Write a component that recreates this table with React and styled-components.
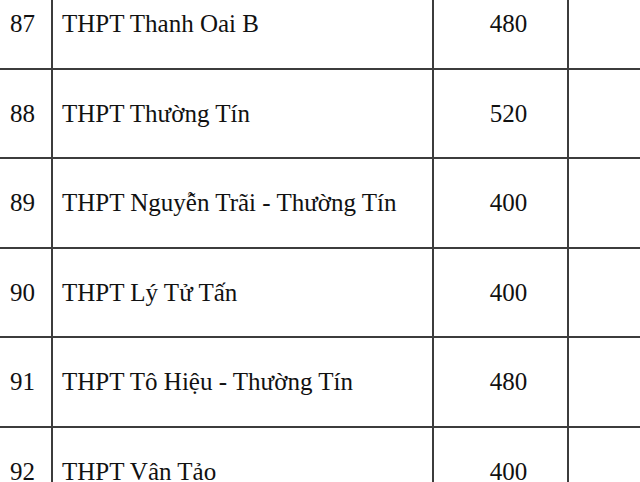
import styled, { createGlobalStyle } from "styled-components";

const rows = [
    { no: 87, name: "THPT Thanh Oai B", quota: 480 },
    { no: 88, name: "THPT Thường Tín", quota: 520 },
    { no: 89, name: "THPT Nguyễn Trãi - Thường Tín", quota: 400 },
    { no: 90, name: "THPT Lý Tử Tấn", quota: 400 },
    { no: 91, name: "THPT Tô Hiệu - Thường Tín", quota: 480 },
    { no: 92, name: "THPT Vân Tảo", quota: 400 },
];

export default function App() {
    return (
        <>
            <Global />
            <Table>
                {rows.map((r) => (
                    <Row key={r.no}>
                        <NoCell>
                            <Txt>{r.no}</Txt>
                        </NoCell>
                        <NameCell>
                            <Txt>{r.name}</Txt>
                        </NameCell>
                        <QuotaCell>
                            <Txt>{r.quota}</Txt>
                        </QuotaCell>
                        <EmptyCell />
                    </Row>
                ))}
            </Table>
        </>
    );
}

const Global = createGlobalStyle`
    html, body {
        margin: 0;
        overflow: hidden;
        background: #fff;
        font-family: "Liberation Serif", Tinos, "Times New Roman", serif;
    }
`;

const Table = styled.div`
    margin-top: -20px;
    width: 640px;
    display: flex;
    flex-direction: column;
`;

const Row = styled.div`
    display: grid;
    grid-template-columns: 53px 381px 135px 1fr;
    height: 90px;
    box-sizing: border-box;
    border-bottom: 2px solid #3c3c3c;

    &:nth-child(2n) {
        height: 89px;
    }
`;

const Cell = styled.div`
    display: flex;
    align-items: center;
    box-sizing: border-box;
    border-right: 2px solid #3c3c3c;
    white-space: nowrap;
`;

const Txt = styled.span`
    font-family: "Liberation Serif", Tinos, "Times New Roman", serif;
    font-size: 25px;
    color: #111;
`;

const NoCell = styled(Cell)`
    padding-left: 10px;
`;

const NameCell = styled(Cell)`
    padding-left: 9px;
`;

const QuotaCell = styled(Cell)`
    justify-content: center;
    padding-left: 16px;
`;

const EmptyCell = styled(Cell)`
    border-right: none;
`;
